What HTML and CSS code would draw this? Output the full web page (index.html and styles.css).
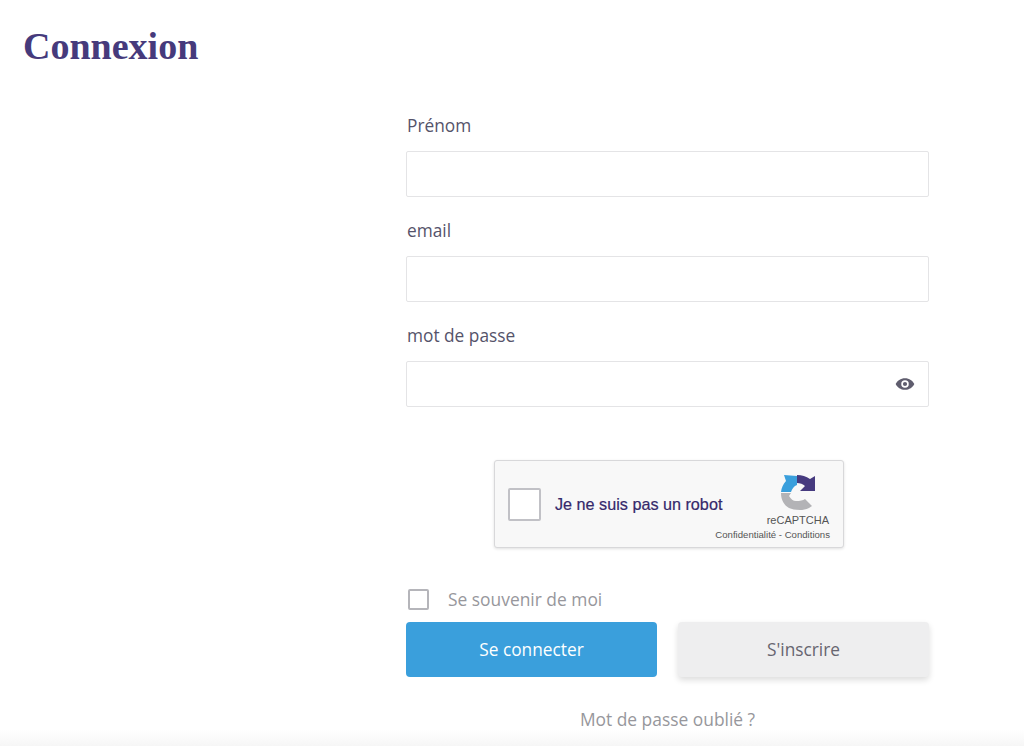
FILE: index.html
```html
<!DOCTYPE html>
<html lang="fr">
<head>
    <meta charset="UTF-8">
    <title>Connexion</title>
    <link rel="stylesheet" href="styles.css">
</head>
<body>
    <h1 class="page-title">Connexion</h1>

    <form class="login-form">
        <div class="field">
            <label class="field-label">Prénom</label>
            <div class="field-input"></div>
        </div>
        <div class="field">
            <label class="field-label">email</label>
            <div class="field-input"></div>
        </div>
        <div class="field">
            <label class="field-label">mot de passe</label>
            <div class="field-input has-icon">
                <svg class="eye-icon" viewBox="0 0 24 16" width="20" height="14">
                    <path fill="#5f5d6e" fill-rule="evenodd" d="M12 1C6.800 1 2.600 4 .8 8c1.800 4 6 7 11.200 7s9.400-3 11.200-7C21.400 4 17.200 1 12 1zm0 11.500A4.500 4.500 0 1 1 12 3.500a4.500 4.500 0 0 1 0 9zm0-7a2.500 2.500 0 1 0 0 5 2.500 2.500 0 0 0 0-5z"/>
                </svg>
            </div>
        </div>

        <div class="captcha">
            <span class="captcha-box"></span>
            <span class="captcha-text">Je ne suis pas un robot</span>
            <div class="captcha-brand">
                <svg class="captcha-logo" viewBox="0 0 36 36" width="36" height="36">
                    <path fill="#3a9fdc" d="M1 18 C1.500 14 3 10 6 7 L4 1 L17 2 L17 11 C14 12 12 15 11 18 Z"/>
                    <path fill="#463a7f" d="M17 1 C22 1 26 2.500 30 5 L35 2 L35 17 L20 17 L25 12 C23 10 20 9 17 9 Z"/>
                    <path fill="#b3b3b6" d="M1 19 L11 19 L9 22 C11 25 13 27 16 27 C20 27 23 26.500 25 25 L32 32 C28 35 24 36 20 36 C15 36 12 35 9 34 C4 31 1 26 1 19 Z"/>
                </svg>
                <span class="captcha-name">reCAPTCHA</span>
                <span class="captcha-links">Confidentialité - Conditions</span>
            </div>
        </div>

        <div class="remember">
            <span class="remember-box"></span>
            <span class="remember-text">Se souvenir de moi</span>
        </div>

        <div class="actions">
            <button type="button" class="btn btn-primary">Se connecter</button>
            <button type="button" class="btn btn-secondary">S'inscrire</button>
        </div>

        <a class="forgot-link">Mot de passe oublié ?</a>
    </form>
    <div class="bottom-fade"></div>
</body>
</html>
```

FILE: styles.css
```css
:root {
    --title-color: #463a7c;
    --label-color: #55536a;
    --border: #e4e4e6;
    --muted: #97979c;
    --blue: #3a9fdc;
}

html, body {
    height: 100%;
}

body {
    margin: 0;
    background: #fff;
    color: var(--label-color);
    font-family: 'Open Sans', sans-serif;
    overflow: hidden;
    position: relative;
}

.page-title {
    margin: 0;
    padding: 24px 0 0 23px;
    color: var(--title-color);
    font-family: 'Liberation Serif', serif;
    font-size: 38px;
    line-height: 44px;
    font-weight: 700;
}

.login-form {
    width: 523px;
    margin: 46px 0 0 406px;
    display: flex;
    flex-direction: column;
}

.field {
    margin: 0 0 22px 0;
}

.field-label {
    display: block;
    padding: 1px 0 0 1px;
    font-size: 17.3px;
    line-height: 22px;
    margin-bottom: 14px;
}

.field-input {
    height: 44px;
    border: 1px solid var(--border);
    border-radius: 2px;
    background: #fff;
    display: flex;
    align-items: center;
    justify-content: flex-end;
}

.eye-icon {
    margin-right: 13px;
}

.captcha {
    align-self: center;
    width: 348px;
    height: 86px;
    margin: 31px 0 0 3px;
    border: 1px solid #d8d8da;
    border-radius: 3px;
    background: #f8f8f8;
    box-shadow: 0 1px 3px rgba(0, 0, 0, 0.12);
    display: flex;
    align-items: center;
    font-family: 'Liberation Sans', sans-serif;
    white-space: nowrap;
}

.captcha-box {
    flex-shrink: 0;
    width: 29px;
    height: 29px;
    margin-left: 13px;
    border: 2px solid #c1c1c6;
    border-radius: 2px;
    background: #fff;
}

.captcha-text {
    flex: 1 1 0;
    min-width: 0;
    margin-left: 14px;
    padding-top: 1px;
    font-size: 16.2px;
    color: #35296b;
    -webkit-text-stroke: 0.2px #35296b;
}

.captcha-brand {
    flex-shrink: 0;
    margin-right: 13px;
    align-self: stretch;
    padding-top: 13px;
    display: flex;
    flex-direction: column;
    align-items: flex-end;
}

.captcha-logo {
    flex-shrink: 0;
    margin-right: 14px;
    margin-bottom: 4px;
}

.captcha-name {
    margin-right: 1px;
    font-size: 11px;
    line-height: 13px;
    color: #555;
}

.captcha-links {
    margin-top: 1px;
    font-size: 9.600px;
    line-height: 14px;
    color: #555;
}

.remember {
    display: flex;
    align-items: center;
    margin-top: 39px;
    height: 24px;
}

.remember-box {
    width: 17px;
    height: 17px;
    margin-left: 2px;
    border: 2px solid #b5b5ba;
    border-radius: 2px;
}

.remember-text {
    margin-left: 19px;
    font-size: 17.4px;
    color: var(--muted);
}

.actions {
    display: flex;
    gap: 21px;
    margin-top: 11px;
}

.btn {
    width: 251px;
    height: 55px;
    border: none;
    border-radius: 4px;
    font-family: inherit;
    font-size: 17.3px;
}

.btn-primary {
    background: var(--blue);
    color: #fff;
}

.btn-secondary {
    background: #eeeeef;
    color: #66656f;
    box-shadow: 0 3px 6px rgba(0, 0, 0, 0.14);
}

.forgot-link {
    margin-top: 31px;
    text-align: center;
    font-size: 17.4px;
    line-height: 22px;
    color: var(--muted);
}

.bottom-fade {
    position: absolute;
    left: 0;
    right: 0;
    bottom: 0;
    height: 16px;
    background: linear-gradient(rgba(245, 245, 245, 0), #f6f6f6);
}
```
